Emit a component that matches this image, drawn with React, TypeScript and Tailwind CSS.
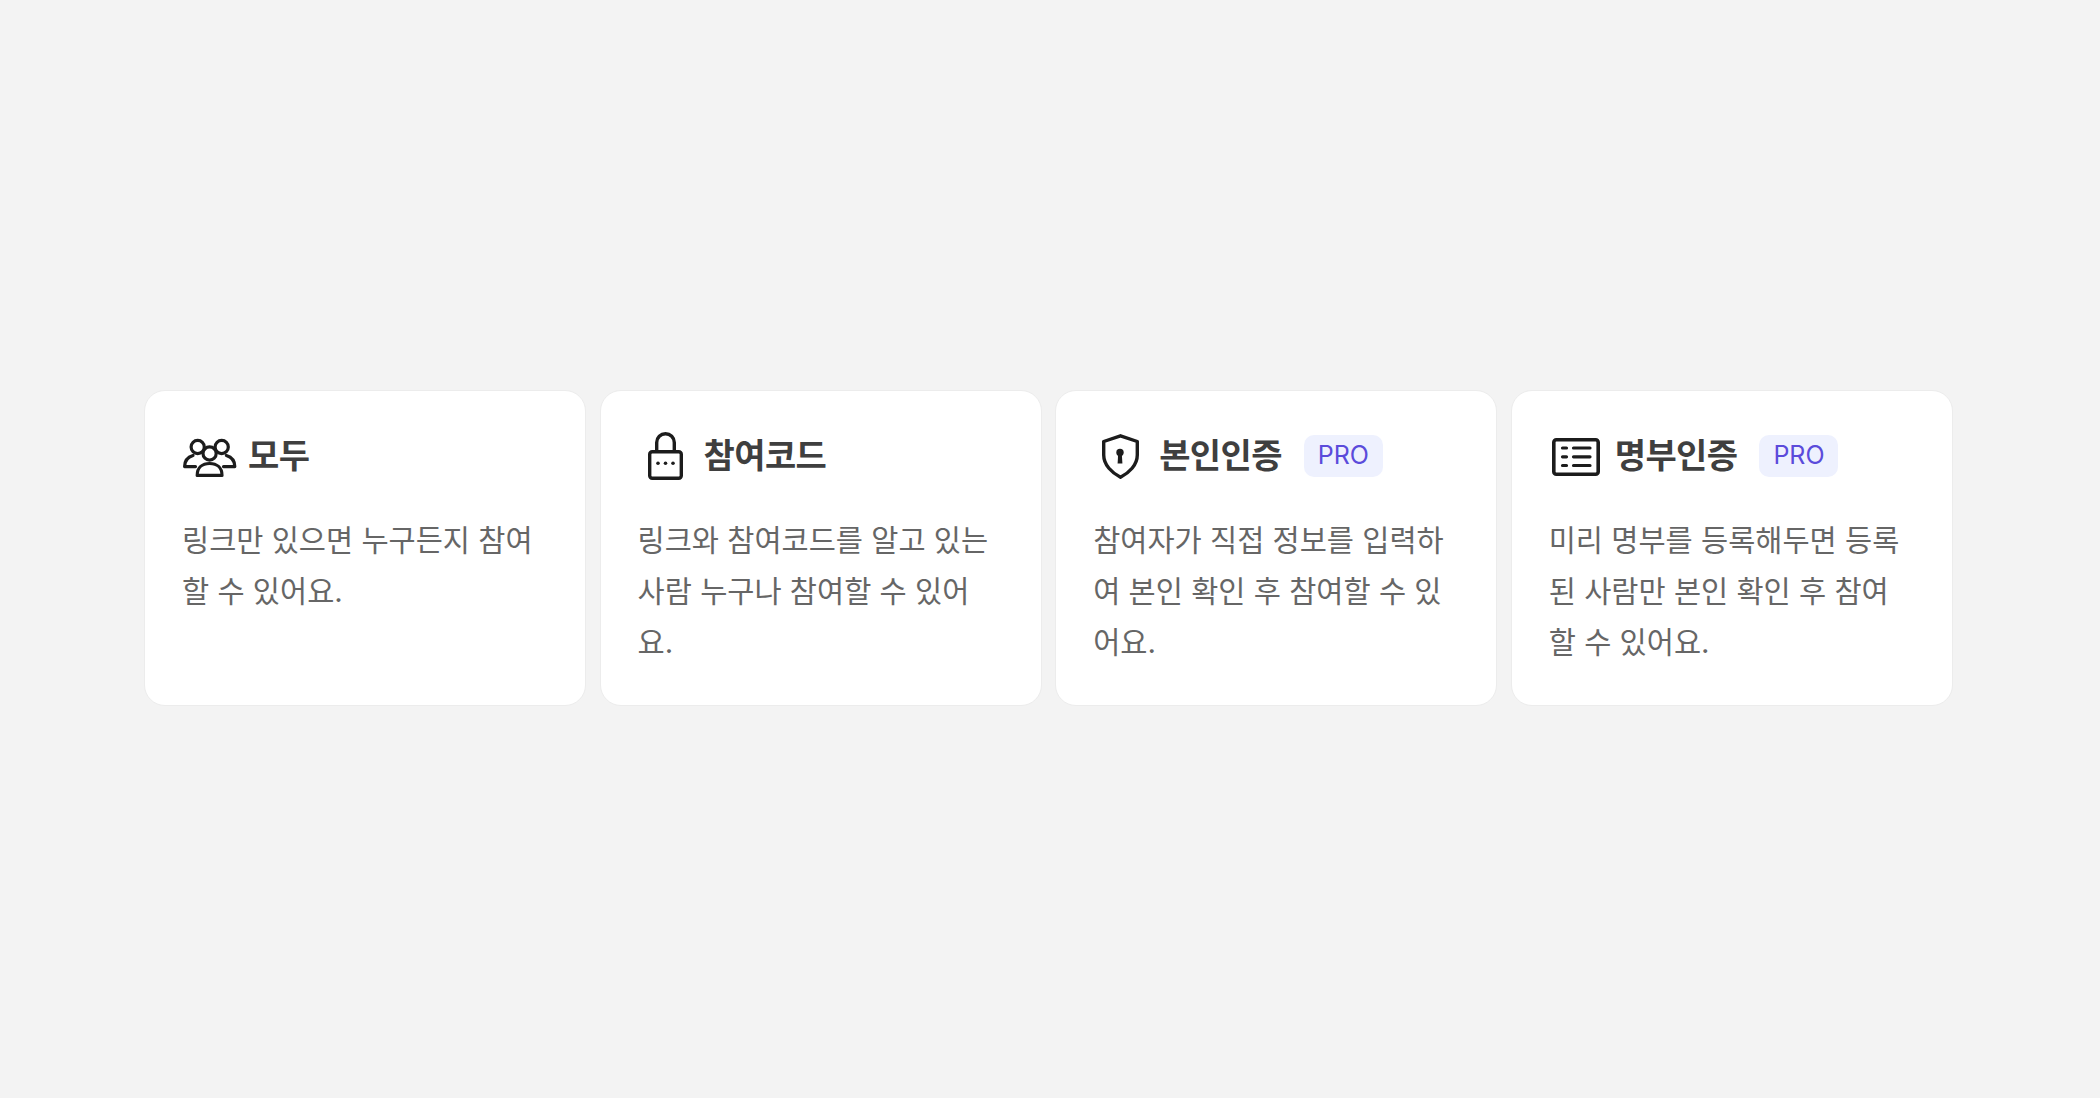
import type { ReactNode } from "react";

const fontStack = "font-['Inter','Noto_Sans_CJK_KR',sans-serif]";

function GroupIcon() {
  return (
    <svg width="55" height="56" viewBox="0 0 55 56" fill="none" stroke="#1c1c1c" strokeWidth="3.2" strokeLinejoin="round" strokeLinecap="round">
      <circle cx="15.7" cy="19" r="6.6" />
      <circle cx="39.7" cy="19" r="6.6" />
      <path d="M11 27.5C6 29 2.6 33 2.6 38.6H13.5" />
      <path d="M44.4 27.5C49.4 29 52.8 33 52.8 38.6H41.5" />
      <circle cx="27.6" cy="25.5" r="6.6" fill="#fff" />
      <path d="M15.2 47.4C15.2 39.5 20.5 35.5 27.6 35.5S40 39.5 40 47.4Z" fill="#fff" />
    </svg>
  );
}

function LockIcon() {
  return (
    <svg width="55" height="56" viewBox="0 0 55 56" fill="none" stroke="#1c1c1c" strokeWidth="3.4">
      <rect x="11.7" y="23.7" width="31.6" height="26.6" rx="2.5" />
      <path d="M18.7 23.7V14.5a8.8 8.8 0 0 1 17.6 0V23.7" />
      <circle cx="20" cy="35.3" r="1.8" fill="#1c1c1c" stroke="none" />
      <circle cx="27.5" cy="35.3" r="1.8" fill="#1c1c1c" stroke="none" />
      <circle cx="35" cy="35.3" r="1.8" fill="#1c1c1c" stroke="none" />
    </svg>
  );
}

function ShieldIcon() {
  return (
    <svg width="55" height="56" viewBox="0 0 55 56" fill="none" stroke="#1c1c1c" strokeWidth="3.4" strokeLinejoin="round">
      <path d="M27.5 7.8L44.3 13.5V27C44.3 37 36 45 27.5 49.2C19 45 10.7 37 10.7 27V13.5Z" />
      <circle cx="27" cy="24.4" r="3.7" fill="#1c1c1c" stroke="none" />
      <path d="M25.2 25H28.8L29.4 35.6H24.6Z" fill="#1c1c1c" stroke="none" />
    </svg>
  );
}

function ListIcon() {
  return (
    <svg width="55" height="56" viewBox="0 0 55 56" fill="none" stroke="#1c1c1c" strokeWidth="3.6" strokeLinecap="round">
      <rect x="4.8" y="11.8" width="44.4" height="34.4" rx="2.5" />
      <path d="M13.5 20H17.5M24.5 20H41M13.5 28.8H17.5M24.5 28.8H41M13.5 37.5H17.5M24.5 37.5H41" strokeWidth="3.2" />
    </svg>
  );
}

interface CardProps {
  icon: ReactNode;
  title: string;
  pro?: boolean;
  children: string;
}

function Card({ icon, title, pro, children }: CardProps) {
  return (
    <article className="rounded-[21px] border border-[#ececec] bg-white p-[37px]">
      <header className="flex h-[56px] items-center">
        {icon}
        <h3 className="ml-[11px] text-[34px] leading-[56px] font-semibold tracking-[-0.6px] text-[#3f3f3f]">{title}</h3>
        {pro && (
          <span className="ml-[22px] flex h-[42px] w-[79px] items-center justify-center rounded-[10px] bg-[#eef1fe] text-[25px] text-[#5b4bdb]">
            PRO
          </span>
        )}
      </header>
      <p className="mt-[31px] text-[29.5px] leading-[51px] text-[#666666]">{children}</p>
    </article>
  );
}

export default function App() {
  return (
    <div className={`flex h-[1098px] items-center bg-[#f3f3f3] pb-[2px] pl-[144px] ${fontStack}`}>
      <div className="grid w-[1809px] grid-cols-4 gap-[13.33px]">
        <Card icon={<GroupIcon />} title="모두">링크만 있으면 누구든지 참여할 수 있어요.</Card>
        <Card icon={<LockIcon />} title="참여코드">링크와 참여코드를 알고 있는 사람 누구나 참여할 수 있어요.</Card>
        <Card icon={<ShieldIcon />} title="본인인증" pro>참여자가 직접 정보를 입력하여 본인 확인 후 참여할 수 있어요.</Card>
        <Card icon={<ListIcon />} title="명부인증" pro>미리 명부를 등록해두면 등록된 사람만 본인 확인 후 참여할 수 있어요.</Card>
      </div>
    </div>
  );
}
